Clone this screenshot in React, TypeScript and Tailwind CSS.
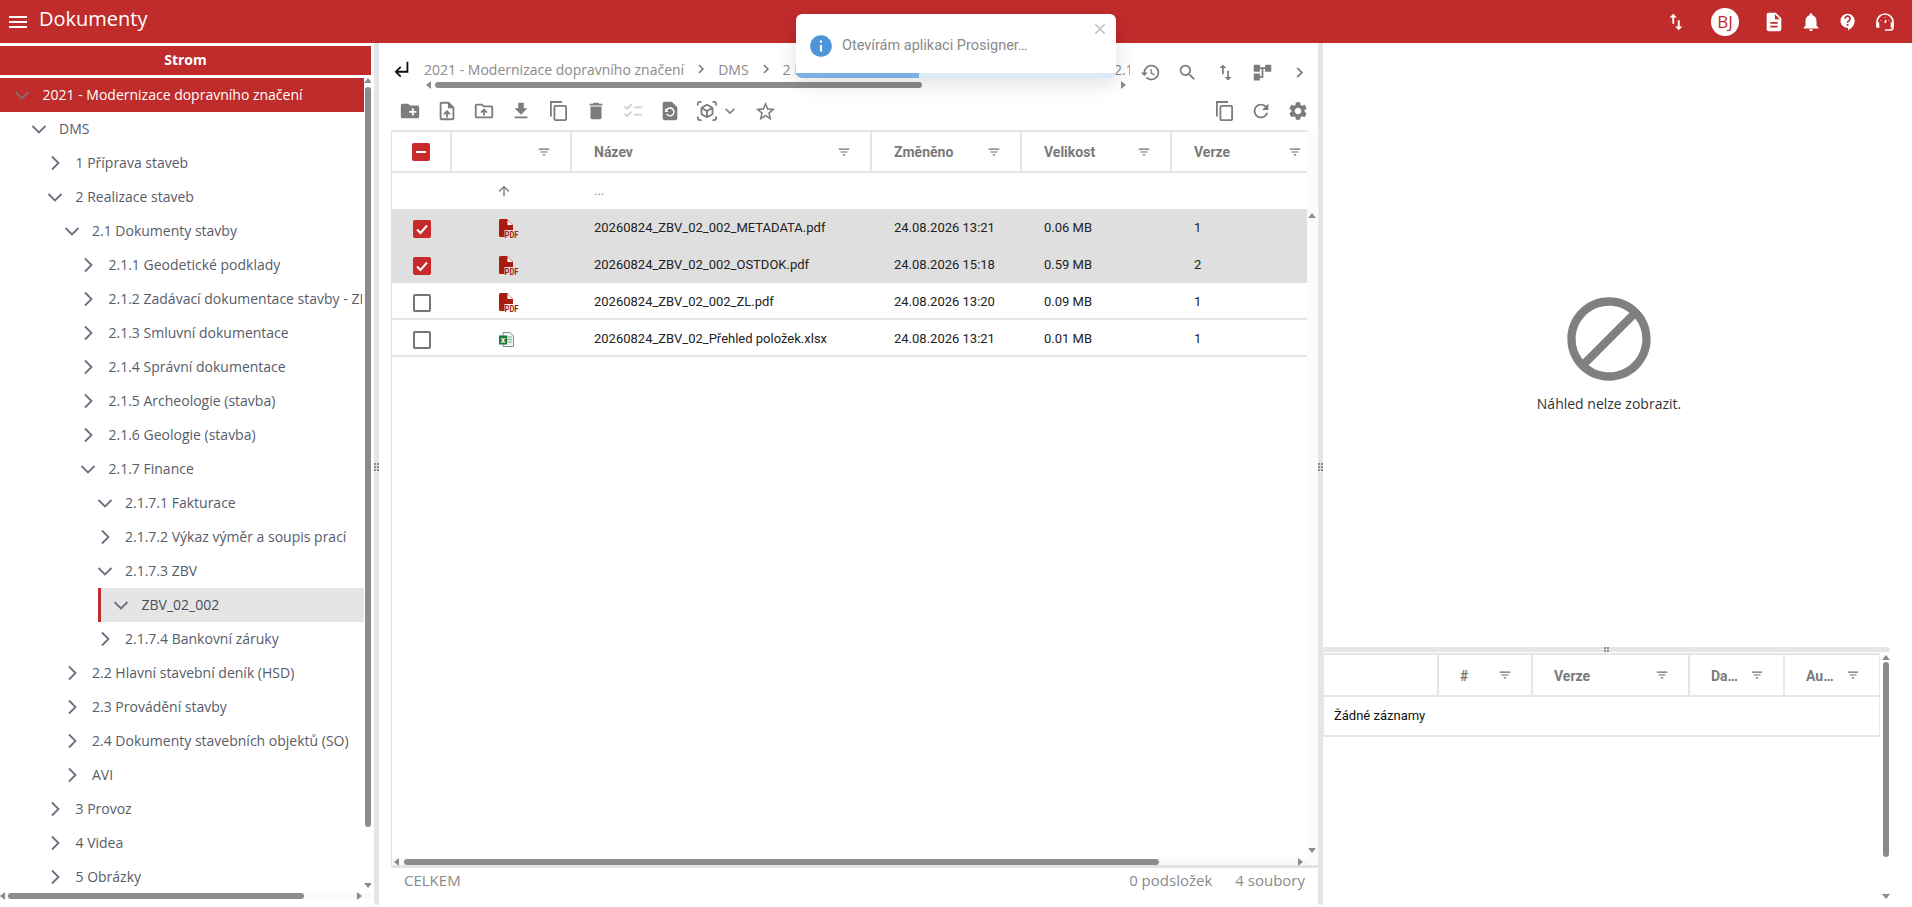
import type { ReactNode } from 'react';
import {
  MdCreateNewFolder,
  MdOutlineUploadFile,
  MdOutlineDriveFolderUpload,
  MdFileDownload,
  MdDelete,
  MdOutlineChecklist,
  MdRestorePage,
  MdOutlineViewInAr,
  MdExpandMore,
  MdStarBorder,
  MdHistory,
  MdSearch,
  MdImportExport,
  MdAccountTree,
  MdChevronRight,
  MdRefresh,
  MdSettings,
  MdDescription,
  MdNotifications,
  MdContactSupport,
  MdFilterList,
  MdSubdirectoryArrowLeft,
  MdArrowUpward,
  MdBlock,
  MdInfo,
  MdClose,
  MdMenu,
} from 'react-icons/md';

const openSans = "font-['Open_Sans',sans-serif]";
const roboto = "font-['Roboto',sans-serif]";

type TreeRow = { label: string; level: number; open: boolean };

const treeRows: TreeRow[] = [
  { label: '2021 - Modernizace dopravního značení', level: 0, open: true },
  { label: 'DMS', level: 1, open: true },
  { label: '1 Příprava staveb', level: 2, open: false },
  { label: '2 Realizace staveb', level: 2, open: true },
  { label: '2.1 Dokumenty stavby', level: 3, open: true },
  { label: '2.1.1 Geodetické podklady', level: 4, open: false },
  { label: '2.1.2 Zadávací dokumentace stavby - ZD', level: 4, open: false },
  { label: '2.1.3 Smluvní dokumentace', level: 4, open: false },
  { label: '2.1.4 Správní dokumentace', level: 4, open: false },
  { label: '2.1.5 Archeologie (stavba)', level: 4, open: false },
  { label: '2.1.6 Geologie (stavba)', level: 4, open: false },
  { label: '2.1.7 Finance', level: 4, open: true },
  { label: '2.1.7.1 Fakturace', level: 5, open: true },
  { label: '2.1.7.2 Výkaz výměr a soupis prací', level: 5, open: false },
  { label: '2.1.7.3 ZBV', level: 5, open: true },
  { label: 'ZBV_02_002', level: 6, open: true },
  { label: '2.1.7.4 Bankovní záruky', level: 5, open: false },
  { label: '2.2 Hlavní stavební deník (HSD)', level: 3, open: false },
  { label: '2.3 Provádění stavby', level: 3, open: false },
  { label: '2.4 Dokumenty stavebních objektů (SO)', level: 3, open: false },
  { label: 'AVI', level: 3, open: false },
  { label: '3 Provoz', level: 2, open: false },
  { label: '4 Videa', level: 2, open: false },
  { label: '5 Obrázky', level: 2, open: false },
];

const files = [
  { name: '20260824_ZBV_02_002_METADATA.pdf', changed: '24.08.2026 13:21', size: '0.06 MB', version: '1', checked: true, kind: 'pdf' },
  { name: '20260824_ZBV_02_002_OSTDOK.pdf', changed: '24.08.2026 15:18', size: '0.59 MB', version: '2', checked: true, kind: 'pdf' },
  { name: '20260824_ZBV_02_002_ZL.pdf', changed: '24.08.2026 13:20', size: '0.09 MB', version: '1', checked: false, kind: 'pdf' },
  { name: '20260824_ZBV_02_Přehled položek.xlsx', changed: '24.08.2026 13:21', size: '0.01 MB', version: '1', checked: false, kind: 'xlsx' },
];

function Chevron({ open, light }: { open: boolean; light?: boolean }) {
  return (
    <svg viewBox="0 0 16 16" className="w-4 h-4 shrink-0" fill="none" stroke={light ? '#8a6a78' : '#6b7080'} strokeWidth="1.8">
      {open ? <path d="M1.500 5l6.500 6.500L14.500 5" /> : <path d="M5 1.500L11.500 8 5 14.500" />}
    </svg>
  );
}

function Grip({ vertical }: { vertical?: boolean }) {
  return (
    <div className="grid grid-cols-2 gap-[1px]">
      {[0, 1, 2, 3, 4, 5].slice(0, vertical ? 6 : 4).map((i) => (
        <span key={i} className="w-[2px] h-[2px] bg-[#8c8c8c]" />
      ))}
    </div>
  );
}

function Tree() {
  return (
    <div className={`w-[364px] shrink-0 text-[14px] ${openSans}`}>
      {treeRows.map((row, i) => {
        const first = i === 0;
        const selected = row.label === 'ZBV_02_002';
        const pad = 14 + row.level * 16.5;
        return (
          <div key={row.label} className={`h-[34px] flex items-center whitespace-nowrap overflow-hidden ${first ? 'bg-[#c02b2b] text-white' : 'text-[#585c6a]'}`}>
            {selected ? (
              <div className="flex items-center h-full w-full ml-[98px] border-l-[3px] border-[#c02b2b] bg-[#e5e5e5] pl-[12px] text-[#4b4f5c]">
                <Chevron open />
                <span className="ml-[12.500px] -mt-[2px]">{row.label}</span>
              </div>
            ) : (
              <div className="flex items-center max-w-[362px] overflow-hidden" style={{ paddingLeft: pad }}>
                <Chevron open={row.open} light={first} />
                <span className="ml-[12.500px] -mt-[2px]">{row.label}</span>
              </div>
            )}
          </div>
        );
      })}
    </div>
  );
}

function Up() {
  return <span className="block shrink-0 w-0 h-0 border-x-[4px] border-x-transparent border-b-[5px] border-b-[#8c8c8c]" />;
}
function Down() {
  return <span className="block shrink-0 w-0 h-0 border-x-[4px] border-x-transparent border-t-[5px] border-t-[#8c8c8c]" />;
}
function Left() {
  return <span className="block shrink-0 w-0 h-0 border-y-[4px] border-y-transparent border-r-[5px] border-r-[#8c8c8c]" />;
}
function Right() {
  return <span className="block shrink-0 w-0 h-0 border-y-[4px] border-y-transparent border-l-[5px] border-l-[#8c8c8c]" />;
}

function Checkbox({ state }: { state: 'on' | 'off' | 'some' }) {
  if (state === 'off') {
    return <span className="block w-[18px] h-[18px] rounded-[2px] border-2 border-[#757575] bg-white" />;
  }
  return (
    <span className="flex items-center justify-center w-[18px] h-[18px] rounded-[2px] bg-[#c62a2a]">
      {state === 'on' ? (
        <svg viewBox="0 0 18 18" className="w-[18px] h-[18px]" fill="none" stroke="#fff" strokeWidth="2">
          <path d="M4 9.500l3.500 3.500L14 5.500" />
        </svg>
      ) : (
        <span className="w-[10px] h-[2px] bg-white" />
      )}
    </span>
  );
}

function PdfIcon() {
  return (
    <svg viewBox="0 0 20 20" className="w-[20px] h-[20px]">
      <path d="M1.500 0H8l6 6v5H5.500v7h-4A1.500 1.500 0 0 1 0 16.500V1.500A1.500 1.500 0 0 1 1.500 0z" fill="#ab1c10" />
      <path d="M8.500 1v5h5z" fill="#fff" />
      <text x="5.500" y="19" fontFamily="Roboto, sans-serif" fontSize="9" fontWeight="700" fill="#ab1c10" textLength="14" lengthAdjust="spacingAndGlyphs">PDF</text>
    </svg>
  );
}

function XlsIcon() {
  return (
    <svg viewBox="0 0 15 15" className="w-[15px] h-[15px]">
      <path d="M4 .5h7l3.500 3.500v10.500H4z" fill="#f3f3f3" stroke="#8d8d8d" />
      <path d="M8 5h5M8 7.500h5M8 10h5" stroke="#6fae86" strokeWidth="1.200" />
      <rect x="0" y="3.500" width="8" height="9" fill="#1d7a45" />
      <text x="1.800" y="10.800" fontFamily="Roboto, sans-serif" fontSize="7" fontWeight="700" fill="#fff">X</text>
    </svg>
  );
}

function CopyIcon() {
  return (
    <svg viewBox="0 0 18 20" className="w-[18px] h-[20px]" fill="none" stroke="#7c7c7c" strokeWidth="1.800">
      <path d="M13 1H1.900v14.500" />
      <rect x="5.400" y="4.900" width="11.700" height="14.200" rx="1" />
    </svg>
  );
}

function HeadsetGauge() {
  return (
    <svg viewBox="0 0 20 20" className="w-[20px] h-[20px]" fill="none" stroke="#fff" strokeWidth="1.600">
      <path d="M2 13.500V10a8 8 0 0 1 16 0v3.500" />
      <path d="M2 11h1.500v4H2zM16.500 11H18v4h-1.500z" fill="#fff" />
      <path d="M18 15.500c0 1.500-1 2.500-2.500 2.500H10" />
      <path d="M10 5.500v.5M6 8v.5M14 8v.5" />
      <path d="M10 11l1-3" />
    </svg>
  );
}

function HeadCell({ label, width, border = true, tight, pad = 'pl-[22px]' }: { label?: ReactNode; width: string; border?: boolean; tight?: boolean; pad?: string }) {
  return (
    <div className={`${width} h-full flex items-center ${pad} justify-between ${tight ? 'pr-[5px]' : 'pr-[19px]'} ${border ? 'border-r-2 border-[#e6e6e6]' : ''}`}>
      <span className="pt-[2px] font-bold text-[#7a7a7a] text-[14px]">{label}</span>
      <MdFilterList size={14} color="#6f6f6f" />
    </div>
  );
}

function ToolIcon({ children }: { children: ReactNode }) {
  return <div className="w-[37.200px] flex items-center justify-center">{children}</div>;
}

export default function App() {
  const gray = '#7c7c7c';
  return (
    <div className={`relative w-[1912px] h-[907px] overflow-hidden bg-white flex flex-col ${roboto}`}>
      {/* top bar */}
      <header className="h-[43px] shrink-0 bg-[#c02b2b] flex items-center text-white">
        <MdMenu size={24} className="ml-[6px]" />
        <span className={`ml-[9px] -mt-[6px] text-[20px] ${openSans}`}>Dokumenty</span>
        <div className="ml-auto flex items-center">
          <MdImportExport size={22} className="mr-[24px]" />
          <span className={`w-[28px] h-[28px] rounded-full bg-white flex items-center justify-center text-[#c02b2b] text-[17px] ${openSans}`}>BJ</span>
          <MdDescription size={22} className="ml-[24px]" />
          <MdNotifications size={22} className="ml-[15px]" />
          <MdContactSupport size={20} className="ml-[16px]" />
          <div className="ml-[17px] mr-[17px]">
            <HeadsetGauge />
          </div>
        </div>
      </header>

      <div className="flex-1 flex min-h-0">
        {/* tree panel */}
        <aside className="w-[371px] shrink-0 flex flex-col pt-[3px]">
          <div className={`h-[29px] shrink-0 bg-[#c02b2b] text-white font-bold text-[14px] flex items-center justify-center pb-[2px] ${openSans}`}>Strom</div>
          <div className="mt-[3px] h-[815px] shrink-0 flex overflow-hidden">
            <Tree />
            <div className="ml-[1px] w-[6px] flex flex-col items-center pt-[0px]">
              <Up />
              <div className="mt-[4px] w-[6px] h-[740px] shrink-0 rounded-[3px] bg-[#8c8c8c]" />
              <div className="mt-[56px]">
                <Down />
              </div>
            </div>
          </div>
          <div className="h-[6px] shrink-0 flex items-center pr-[9px] bg-[#f9f9f9]">
            <Left />
            <div className="ml-[3px] w-[296px] h-[6px] rounded-[3px] bg-[#8c8c8c]" />
            <div className="ml-auto">
              <Right />
            </div>
          </div>
        </aside>
        <div className="ml-[3px] mb-[2px] w-[5px] shrink-0 bg-[#e6e6e6] rounded-b-[3px] flex items-center justify-center pb-[14px]">
          <Grip vertical />
        </div>

        {/* file list panel */}
        <main className="w-[939px] shrink-0 flex flex-col">
          <div className="h-[49px] shrink-0 flex">
            <div className="w-[47px] pl-[11px] pt-[15px]">
              <MdSubdirectoryArrowLeft size={22} color="#111" />
            </div>
            <div className="w-[706px] shrink-0 flex flex-col overflow-hidden pt-[15px]">
              <div className={`h-[22px] flex items-center whitespace-nowrap text-[14px] text-[#8a8a8a] ${openSans}`}>
                {['2021 - Modernizace dopravního značení', 'DMS', '2 Realizace staveb', '2.1 Dokumenty stavby', '2.1.7 Finance'].map((part, i) => (
                  <span key={part} className="flex items-center shrink-0">
                    {i > 0 && <MdChevronRight size={18} color="#777" className="mx-[8px]" />}
                    <span className={i === 3 ? 'text-transparent' : ''}>{part}</span>
                  </span>
                ))}
              </div>
              <div className="mt-[2px] h-[6px] flex items-center">
                <span className="ml-[2px]"><Left /></span>
                <div className="ml-[4px] w-[487px] h-[6px] rounded-[3px] bg-[#8c8c8c]" />
                <span className="ml-[199px]"><Right /></span>
              </div>
            </div>
            <div className="ml-[2px] pt-[19px] flex items-start">
              <div className="w-[37.200px] flex justify-center"><MdHistory size={21} color={gray} /></div>
              <div className="w-[37.200px] flex justify-center"><MdSearch size={21} color={gray} /></div>
              <div className="w-[37.200px] flex justify-center"><MdImportExport size={21} color={gray} /></div>
              <div className="w-[37.200px] flex justify-center"><MdAccountTree size={21} color={gray} className="-scale-x-100" /></div>
              <div className="w-[37.200px] flex justify-center"><MdChevronRight size={21} color={gray} /></div>
            </div>
          </div>

          <div className="h-[38px] shrink-0 flex items-center pl-[12px]">
            <ToolIcon><MdCreateNewFolder size={22} color={gray} /></ToolIcon>
            <ToolIcon><MdOutlineUploadFile size={22} color={gray} /></ToolIcon>
            <ToolIcon><MdOutlineDriveFolderUpload size={22} color={gray} /></ToolIcon>
            <ToolIcon><MdFileDownload size={22} color={gray} /></ToolIcon>
            <ToolIcon><CopyIcon /></ToolIcon>
            <ToolIcon><MdDelete size={22} color={gray} /></ToolIcon>
            <ToolIcon><MdOutlineChecklist size={22} color="#d0d0d0" /></ToolIcon>
            <ToolIcon><MdRestorePage size={22} color={gray} /></ToolIcon>
            <div className="w-[37.200px] flex items-center justify-center"><MdOutlineViewInAr size={22} color={gray} /></div>
            <MdExpandMore size={20} color={gray} className="-ml-[6px]" />
            <MdStarBorder size={23} color={gray} className="ml-[14px]" />
            <div className="ml-auto flex pr-[1px]">
              <ToolIcon><CopyIcon /></ToolIcon>
              <ToolIcon><MdRefresh size={22} color={gray} /></ToolIcon>
              <ToolIcon><MdSettings size={22} color={gray} /></ToolIcon>
            </div>
          </div>

          <div className="flex-1 min-h-0 ml-[12px] flex flex-col">
            <div className="flex-1 min-h-0 flex border-l border-b-[3px] border-[#e3e3e3]">
              <div className="w-[915px] shrink-0 flex flex-col text-[13px] text-[#222]">
                <div className="h-[43px] shrink-0 flex items-center border-y-2 border-[#e6e6e6]">
                  <div className="w-[60px] h-full border-r-2 border-[#e6e6e6] flex items-center justify-center"><Checkbox state="some" /></div>
                  <HeadCell width="w-[120px]" />
                  <HeadCell width="w-[300px]" label="Název" />
                  <HeadCell width="w-[150px]" label="Změněno" />
                  <HeadCell width="w-[150px]" label="Velikost" />
                  <HeadCell width="w-[135px]" label="Verze" border={false} tight />
                </div>
                <div className="h-[36px] shrink-0 flex items-center text-[#888]">
                  <div className="w-[60px]" />
                  <div className="w-[120px] pl-[44px]"><MdArrowUpward size={16} color="#777" /></div>
                  <div className="pl-[22px]">...</div>
                </div>
                {files.map((file) => (
                  <div key={file.name} className={`h-[37px] shrink-0 flex items-center ${file.checked ? 'bg-[#dfdfdf]' : 'shadow-[inset_0_-2px_0_#e6e6e6]'}`}>
                    <div className="w-[60px] pt-[3px] flex justify-center"><Checkbox state={file.checked ? 'on' : 'off'} /></div>
                    <div className="w-[120px] pl-[47px] pt-[2px] flex">{file.kind === 'pdf' ? <PdfIcon /> : <XlsIcon />}</div>
                    <div className="w-[300px] pl-[22px]">{file.name}</div>
                    <div className="w-[150px] pl-[22px]">{file.changed}</div>
                    <div className="w-[150px] pl-[22px]">{file.size}</div>
                    <div className="w-[135px] pl-[22px]">{file.version}</div>
                  </div>
                ))}
                <div className="mt-auto h-[6px] flex items-center pl-[2px] bg-[#f9f9f9]">
                  <Left />
                  <div className="ml-[5px] w-[755px] h-[6px] rounded-[3px] bg-[#8c8c8c]" />
                  <span className="ml-[139px]"><Right /></span>
                </div>
              </div>
              <div className="w-[10px] flex flex-col items-center pt-[83px] pb-[12px] justify-between bg-[#fbfbfb]">
                <Up />
                <Down />
              </div>
            </div>
            <div className={`h-[39px] shrink-0 flex items-start pt-[1px] text-[15px] leading-[22px] text-[#8a8a8a] pl-[13px] pr-[13px] ${openSans}`}>
              <span>CELKEM</span>
              <span className="ml-auto">0 podsložek</span>
              <span className="ml-[23px]">4 soubory</span>
            </div>
          </div>
        </main>
        <div className="mb-[2px] w-[5px] shrink-0 bg-[#e6e6e6] rounded-b-[3px] flex items-center justify-center pb-[14px]">
          <Grip vertical />
        </div>

        {/* preview panel */}
        <section className="w-[567px] shrink-0 flex flex-col">
          <div className={`h-[604px] shrink-0 flex flex-col items-center pt-[246px] pl-[5px] ${openSans}`}>
            <MdBlock size={100} color="#808080" />
            <span className="mt-[4px] text-[14px] text-[#333]">Náhled nelze zobrazit.</span>
          </div>
          <div className="h-[5px] shrink-0 bg-[#e6e6e6] rounded-[2px] flex items-center justify-center">
            <Grip />
          </div>
          <div className="flex-1 min-h-0 flex">
            <div className="w-[557px] shrink-0">
              <div className="h-[44px] mt-[1px] flex items-center border-y-2 border-l border-r border-[#e6e6e6]">
                <div className="w-[115px] h-full border-r-2 border-[#e6e6e6]" />
                <HeadCell width="w-[94px]" label="#" pad="pl-[21px]" />
                <HeadCell width="w-[157px]" label="Verze" pad="pl-[21px]" />
                <HeadCell width="w-[95px]" label="Da…" pad="pl-[21px]" />
                <HeadCell width="w-[94px]" label="Au…" border={false} pad="pl-[21px]" />
              </div>
              <div className="h-[40px] flex items-center pl-[10px] border-b-2 border-x border-[#e6e6e6] text-[13px] text-[#111]">Žádné záznamy</div>
            </div>
            <div className="ml-[3px] w-[6px] flex flex-col items-center pt-[3px]">
              <Up />
              <div className="mt-[2px] w-[6px] h-[195px] shrink-0 rounded-[3px] bg-[#8c8c8c]" />
              <div className="mt-[37px]">
                <Down />
              </div>
            </div>
          </div>
        </section>
      </div>

      {/* toast over the breadcrumb */}
      <div className="absolute z-50 left-[796px] top-[14px] w-[320px] h-[64px] rounded-[6px] bg-white shadow-[0_6px_20px_rgba(0,0,0,0.12)] overflow-hidden">
        <div className="flex items-center h-[59px] pt-[5px] pl-[12px]">
          <MdInfo size={26} color="#4d94d8" />
          <span className="ml-[8px] text-[14.500px] text-[#8a8a8a]">Otevírám aplikaci Prosigner…</span>
        </div>
        <div className="absolute right-[7px] top-[6px]">
          <MdClose size={18} color="#bdbdbd" />
        </div>
        <div className="h-[5px] bg-[#dceaf7]">
          <div className="w-[123px] h-full bg-[#7ab0e4]" />
        </div>
      </div>
    </div>
  );
}
